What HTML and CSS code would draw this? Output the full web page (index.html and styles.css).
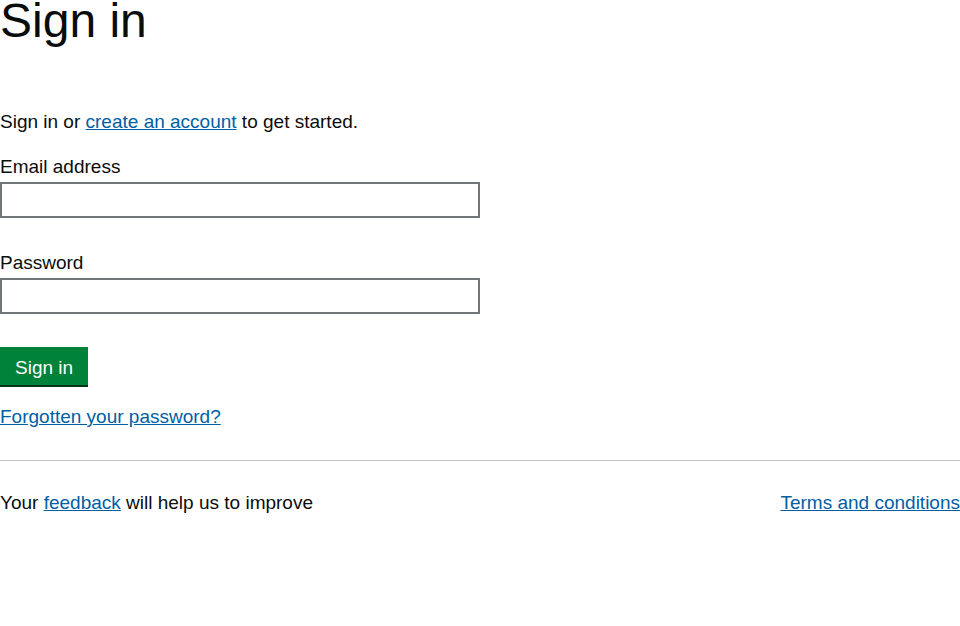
FILE: index.html
```html
<!DOCTYPE html>
<html lang="en">
<head>
<meta charset="utf-8">
<title>Sign in</title>
<link rel="stylesheet" href="styles.css">
</head>
<body>
<main class="main">
  <h1 class="heading">Sign in</h1>
  <p class="intro">Sign in or <a class="link" href="#">create an account</a> to get started.</p>
  <form class="form">
    <div class="field">
      <label class="label" for="email">Email address</label>
      <input class="input" id="email" type="email">
    </div>
    <div class="field">
      <label class="label" for="password">Password</label>
      <input class="input" id="password" type="password">
    </div>
    <button class="button" type="button">Sign in</button>
  </form>
  <p class="forgot"><a class="link" href="#">Forgotten your password?</a></p>
</main>
<footer class="footer">
  <p class="footer-text">Your <a class="link" href="#">feedback</a> will help us to improve</p>
  <a class="link" href="#">Terms and conditions</a>
</footer>
</body>
</html>
```
FILE: styles.css
```css
* { box-sizing: border-box; }
html, body { margin: 0; padding: 0; background: #fff; }
body {
  font-family: "Liberation Sans", Arial, sans-serif;
  font-size: 19px;
  line-height: 25px;
  color: #0b0c0c;
}
.link { color: #005ea5; text-decoration: underline; }
.main { padding: 0; }
.heading {
  margin: 0;
  font-size: 48px;
  line-height: 42px;
  font-weight: 400;
}
.intro { margin: 67px 0 0; }
.form { margin-top: 20px; display: flex; flex-direction: column; align-items: flex-start; }
.field { display: flex; flex-direction: column; margin-bottom: 32px; width: 480px; }
.label { display: block; margin-bottom: 3px; }
.input {
  width: 480px;
  height: 36px;
  border: 2px solid #6f777b;
  border-radius: 0;
  font: inherit;
  padding: 5px;
  margin: 0;
}
.button {
  margin-top: 1px;
  font: inherit;
  line-height: 25px;
  color: #fff;
  background: #00823b;
  border: 0;
  border-radius: 0;
  box-shadow: 0 2px 0 #003618;
  padding: 8px 15px 5px;
  height: 38px;
  white-space: nowrap;
  cursor: pointer;
}
.forgot { margin: 19px 0 0; }
.footer {
  margin-top: 31px;
  border-top: 1px solid #bfc1c3;
  padding-top: 29px;
  display: flex;
  justify-content: space-between;
  align-items: baseline;
}
.footer-text { margin: 0; }
```
